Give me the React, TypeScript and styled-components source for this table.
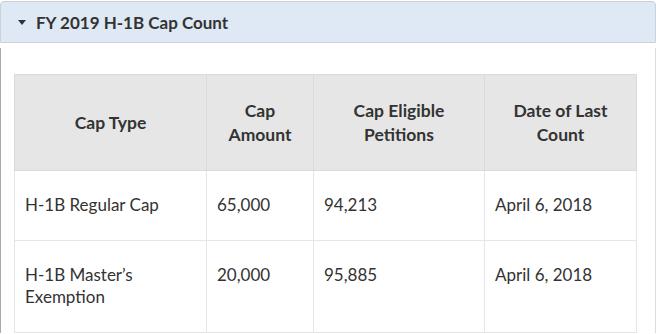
import React from 'react';
import styled, { createGlobalStyle } from 'styled-components';

const GlobalStyle = createGlobalStyle`
  body {
    margin: 0;
    background: #fff;
    font-family: Lato, "Open Sans", sans-serif;
    color: #333;
  }
  * {
    box-sizing: border-box;
  }
`

const Page = styled.div`
  width: 656px;
  padding-top: 1px;
`

const AccordionHeader = styled.div`
  height: 42px;
  display: flex;
  align-items: center;
  gap: 10px;
  padding-left: 17px;

  background-color: #dfe9f5;
  border: 1px solid #cdd0d4;
  border-radius: 4px 4px 0 0;

  font-size: 17px;
  font-weight: 700;
  color: #333;
`

const Caret = styled.span`
  width: 0;
  height: 0;
  border-left: 4.5px solid transparent;
  border-right: 4.5px solid transparent;
  border-top: 5px solid #333;
`

const Panel = styled.div`
  margin-top: 5px;
  padding: 26px 20px 0 13px;
  border-left: 1px solid #a9a9a9;
  border-right: 1px solid #dcdcdc;
`

const Table = styled.table`
  width: 622px;
  border-collapse: collapse;
  table-layout: fixed;
  font-size: 17px;
  color: #333;
`

const Th = styled.th<{ w: number }>`
  width: ${p => p.w}px;
  padding: 24px 8px;
  background-color: #e6e6e6;
  border: 1px solid #dadada;

  font-size: 17.5px;
  font-weight: 700;
  line-height: 23.5px;
  text-align: center;
  vertical-align: middle;
`

const Td = styled.td`
  padding: 23px 10px 24px;
  border: 1px solid #e6e6e6;
  line-height: 22px;
  text-align: left;
  vertical-align: top;
`

const columns = [
  { label: <>Cap Type</>, w: 192 },
  { label: <>Cap<br />Amount</>, w: 107 },
  { label: <>Cap Eligible<br />Petitions</>, w: 171 },
  { label: <>Date of Last<br />Count</>, w: 152 },
]

const rows = [
  [<>H-1B Regular Cap</>, '65,000', '94,213', 'April 6, 2018'],
  [<>H-1B Master’s<br />Exemption</>, '20,000', '95,885', 'April 6, 2018'],
]

export default function App () {
  return (
    <Page>
      <GlobalStyle />
      <AccordionHeader>
        <Caret />
        FY 2019 H-1B Cap Count
      </AccordionHeader>
      <Panel>
        <Table>
          <thead>
            <tr>
              {columns.map((c, i) => (
                <Th key={i} w={c.w}>{c.label}</Th>
              ))}
            </tr>
          </thead>
          <tbody>
            {rows.map((r, i) => (
              <tr key={i}>
                {r.map((cell, j) => <Td key={j}>{cell}</Td>)}
              </tr>
            ))}
          </tbody>
        </Table>
      </Panel>
    </Page>
  );
}
